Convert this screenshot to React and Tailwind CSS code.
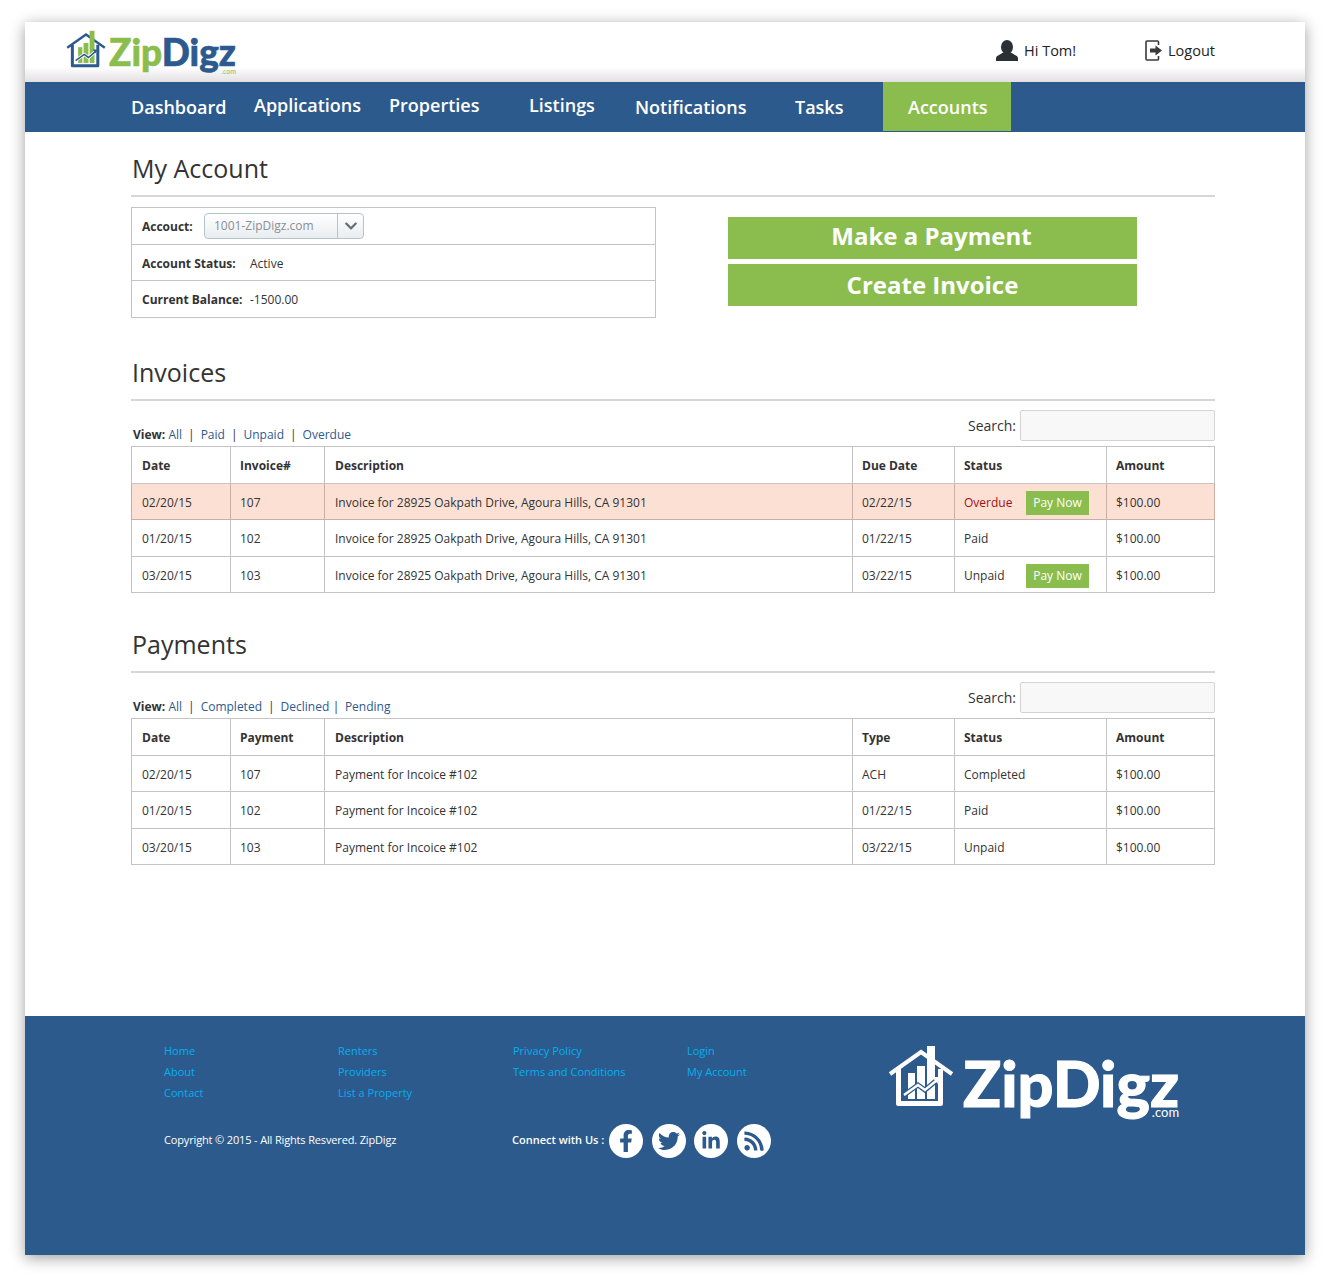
import { FaFacebookF, FaTwitter, FaLinkedinIn, FaRss, FaChevronDown } from "react-icons/fa";

const navItems = [
    { label: "Dashboard", width: "w-[123px]" },
    { label: "Applications", width: "w-[135px]", raised: true },
    { label: "Properties", width: "w-[140px]", raised: true },
    { label: "Listings", width: "w-[106px]", raised: true },
    { label: "Notifications", width: "w-[160px]" },
    { label: "Tasks", width: "w-[88px]" },
];

const invoices = [
    { date: "02/20/15", id: "107", due: "02/22/15", status: "Overdue", pay: true, overdue: true, height: "h-[36px]" },
    { date: "01/20/15", id: "102", due: "01/22/15", status: "Paid", height: "h-[37px]" },
    { date: "03/20/15", id: "103", due: "03/22/15", status: "Unpaid", pay: true, height: "h-[36px]" },
];

const payments = [
    { date: "02/20/15", id: "107", type: "ACH", status: "Completed", height: "h-[36px]" },
    { date: "01/20/15", id: "102", type: "01/22/15", status: "Paid", height: "h-[37px]" },
    { date: "03/20/15", id: "103", type: "03/22/15", status: "Unpaid", height: "h-[36px]" },
];

const footerLinks = [
    { width: "w-[174px]", links: ["Home", "About", "Contact"] },
    { width: "w-[175px]", links: ["Renters", "Providers", "List a Property"] },
    { width: "w-[174px]", links: ["Privacy Policy", "Terms and Conditions"] },
    { width: "w-[120px]", links: ["Login", "My Account"] },
];

const socials = [
    { Icon: FaFacebookF, size: "h-[22px] w-[22px]" },
    { Icon: FaTwitter, size: "h-[22px] w-[22px]" },
    { Icon: FaLinkedinIn, size: "h-[20px] w-[20px]" },
    { Icon: FaRss, size: "h-[22px] w-[22px]" },
];

// left padding per column, the text does not sit evenly in the reference
const pads = ["pl-[10px]", "pl-[9px]", "pl-[10px]", "pl-[9px]", "pl-[9px]", "pl-[9px]"];

function House({ wall, bar, bg, className }) {
    return (
        <svg viewBox="0 0 66 60" className={className} fill="none">
            <path d="M2 28 L33 6 L64 28" stroke={wall} strokeWidth="4" strokeLinejoin="miter" />
            <path d="M10.5 23 V57.5 H52.5 V23" stroke={wall} strokeWidth="5" strokeLinejoin="round" />
            <rect x="20" y="27" width="7" height="26" fill={bar} />
            <rect x="29" y="20" width="8" height="33" fill={bar} />
            <rect x="39" y="0" width="8" height="53" fill={bar} />
            <path d="M16 49 L30 39 L37 44 L49 34" stroke={bg} strokeWidth="5" />
            <path d="M16 49 L30 39 L37 44 L49 34" stroke={wall} strokeWidth="2.5" />
            <path d="M44 31 L51 31 L50 38 Z" fill={wall} />
        </svg>
    );
}

function ViewLinks({ links, separators }) {
    return (
        <p className="text-[12px] leading-[16px] text-[#333]">
            <b className="font-bold">View:</b>{" "}
            {links.map((link, i) => (
                <span key={link}>
                    <a className="text-[#2d5a8e]">{link}</a>
                    {i < links.length - 1 && <span className={separators[i]}>|</span>}
                </span>
            ))}
        </p>
    );
}

function Section({ title, children }) {
    return (
        <section>
            <h2 className="h-[46px] border-b-2 border-[#d6d6d6] pt-px pl-px text-[25px] leading-[33px] text-[#333]">{title}</h2>
            {children}
        </section>
    );
}

function Toolbar({ links, separators }) {
    return (
        <div className="flex h-[45px] items-end justify-between pb-[3px]">
            <div className="pl-[2px]">
                <ViewLinks links={links} separators={separators} />
            </div>
            <div className="flex items-center gap-[4px] self-start pt-[9px]">
                <span className="text-[14px] text-[#333]">Search:</span>
                <input className="h-[31px] w-[195px] rounded-[2px] border border-[#d4d4d4] bg-[#f8f8f8]" />
            </div>
        </div>
    );
}

function DataTable({ headers, children }) {
    return (
        <table className="w-[1083px] table-fixed border-collapse text-[12px] text-[#333]">
            <colgroup>
                <col className="w-[99px]" />
                <col className="w-[94px]" />
                <col className="w-[528px]" />
                <col className="w-[102px]" />
                <col className="w-[152px]" />
                <col className="w-[108px]" />
            </colgroup>
            <thead>
                <tr className="h-[37px]">
                    {headers.map((h, i) => (
                        <th key={h} className={`border border-[#c4c4c4] pt-[2px] text-left font-bold ${pads[i]}`}>{h}</th>
                    ))}
                </tr>
            </thead>
            <tbody>{children}</tbody>
        </table>
    );
}

const cell = "border border-[#c4c4c4] pt-[2px]";
const overdueCell = "border border-[#c9aea5] pt-[2px]";

export default function App() {
    return (
        <div className="h-[1277px] w-[1330px] bg-white px-[25px] pt-[22px] font-['Open_Sans',sans-serif]">
            <div className="h-[1233px] w-[1280px] bg-white shadow-[0_3px_14px_rgba(0,0,0,0.38)]">
                {/* top bar */}
                <header className="flex h-[60px] items-start bg-linear-to-b from-white from-[75%] to-[#e2e0e2] pl-[41px]">
                    <div className="flex items-start pt-[8px]">
                        <House wall="#2d5a8e" bar="#8bbd4e" bg="#ffffff" className="h-[38px] w-[40px]" />
                        <div className="relative mt-px ml-[3px] font-['Lato',sans-serif] text-[37px] leading-[42px] font-black">
                            <span className="text-[#8bbd4e] [-webkit-text-stroke:0.6px_#8bbd4e]">Zip</span>
                            <span className="text-[#2d5a8e] [-webkit-text-stroke:0.6px_#2d5a8e]">Digz</span>
                            <span className="absolute right-0 bottom-[-2px] text-[7px] leading-[8px] font-normal text-[#8bbd4e]">.com</span>
                        </div>
                    </div>
                    <div className="ml-auto flex items-center pt-[18px] pr-[90px] text-[14.5px] text-[#222]">
                        <svg viewBox="0 0 22 21" className="h-[21px] w-[22px] text-[#2b3034]" fill="currentColor">
                            <ellipse cx="11" cy="7" rx="6" ry="7" />
                            <path d="M0 21 V18 Q0 16 3 15 L8 12 H14 L19 15 Q22 16 22 18 V21 Z" />
                        </svg>
                        <span className="ml-[6px] w-[121px]">Hi Tom!</span>
                        <svg viewBox="0 0 18 21" className="h-[21px] w-[18px] text-[#3a3a3a]" fill="none">
                            <path d="M13.5 5 V2 Q13.5 1 12.5 1 H2 Q1 1 1 2 V19 Q1 20 2 20 H12.5 Q13.5 20 13.5 19 V16" stroke="currentColor" strokeWidth="1.6" />
                            <path d="M5 8.5 H10.5 V5.5 L17 10.5 L10.5 15.5 V12.5 H5 Z" fill="currentColor" />
                        </svg>
                        <span className="ml-[5px]">Logout</span>
                    </div>
                </header>

                {/* main nav */}
                <nav className="flex h-[50px] items-start bg-[#2d5a8c] pl-[106px] text-[18px] font-semibold text-white">
                    {navItems.map((item) => (
                        <a key={item.label} className={`flex h-[50px] items-center ${item.width} ${item.raised ? "pb-[4px]" : ""}`}>
                            {item.label}
                        </a>
                    ))}
                    <a className="flex h-[49px] w-[128px] items-center bg-[#8bbd4e] pt-[2px] pl-[25px]">Accounts</a>
                </nav>

                <main className="h-[884px] pl-[106px]">
                    <div className="w-[1084px]">
                        <div className="pt-[19px]">
                            <Section title="My Account" />
                        </div>

                        <div className="mt-[10px] flex items-start">
                            <div className="h-[111px] w-[525px] border border-[#c4c4c4] text-[12px] text-[#333]">
                                <div className="flex h-[37px] items-center border-b border-[#c4c4c4] pl-[10px]">
                                    <b className="w-[62px] pt-[2px] font-bold">Accouct:</b>
                                    <div className="flex h-[26px] w-[160px] items-center rounded-[4px] border border-[#b5c4cc] bg-linear-to-b from-white to-[#e9edf0] text-[#8a8f93]">
                                        <span className="w-[132px] pl-[9px]">1001-ZipDigz.com</span>
                                        <span className="flex h-full flex-1 items-center justify-center border-l border-[#b5c4cc]">
                                            <FaChevronDown className="h-[14px] w-[14px] text-[#666c70]" />
                                        </span>
                                    </div>
                                </div>
                                <div className="flex h-[36px] items-center border-b border-[#c4c4c4] pt-[2px] pl-[10px]">
                                    <b className="w-[108px] font-bold">Account Status:</b>
                                    <span>Active</span>
                                </div>
                                <div className="flex h-[36px] items-center pt-[2px] pl-[10px]">
                                    <b className="w-[108px] font-bold">Current Balance:</b>
                                    <span>-1500.00</span>
                                </div>
                            </div>
                            <div className="ml-[72px] flex flex-col gap-[5px] pt-[10px]">
                                <a className="flex h-[42px] w-[409px] items-center justify-center bg-[#8bbd4e] pr-[2px] pb-[5px] text-[24px] font-bold text-white">Make a Payment</a>
                                <a className="flex h-[42px] w-[409px] items-center justify-center bg-[#8bbd4e] text-[24px] font-bold text-white">Create Invoice</a>
                            </div>
                        </div>

                        <div className="mt-[37px]">
                            <Section title="Invoices">
                                <Toolbar
                                    links={["All", "Paid", "Unpaid", "Overdue"]}
                                    separators={["mx-[6px]", "mx-[6px]", "mx-[6px]"]}
                                />
                                <DataTable headers={["Date", "Invoice#", "Description", "Due Date", "Status", "Amount"]}>
                                    {invoices.map((row) => {
                                        const c = row.overdue ? overdueCell : cell;
                                        return (
                                            <tr key={row.id} className={`${row.height} ${row.overdue ? "bg-[#fde0d4]" : ""}`}>
                                                <td className={`${c} ${pads[0]}`}>{row.date}</td>
                                                <td className={`${c} ${pads[1]}`}>{row.id}</td>
                                                <td className={`${c} ${pads[2]}`}>Invoice for 28925 Oakpath Drive, Agoura Hills, CA 91301</td>
                                                <td className={`${c} ${pads[3]}`}>{row.due}</td>
                                                <td className={`${c} ${pads[4]}`}>
                                                    <div className="flex items-center">
                                                        <span className={`w-[62px] ${row.overdue ? "text-[#a30f16]" : ""}`}>{row.status}</span>
                                                        {row.pay && (
                                                            <a className="flex h-[24px] w-[63px] items-center justify-center bg-[#8bbd4e] text-white">Pay Now</a>
                                                        )}
                                                    </div>
                                                </td>
                                                <td className={`${c} ${pads[5]}`}>$100.00</td>
                                            </tr>
                                        );
                                    })}
                                </DataTable>
                            </Section>
                        </div>

                        <div className="mt-[34px]">
                            <Section title="Payments">
                                <Toolbar
                                    links={["All", "Completed", "Declined", "Pending"]}
                                    separators={["mx-[6px]", "mx-[6px]", "ml-[3.5px] mr-[5.5px]"]}
                                />
                                <DataTable headers={["Date", "Payment", "Description", "Type", "Status", "Amount"]}>
                                    {payments.map((row) => (
                                        <tr key={row.id} className={row.height}>
                                            <td className={`${cell} ${pads[0]}`}>{row.date}</td>
                                            <td className={`${cell} ${pads[1]}`}>{row.id}</td>
                                            <td className={`${cell} ${pads[2]}`}>Payment for Incoice #102</td>
                                            <td className={`${cell} ${pads[3]}`}>{row.type}</td>
                                            <td className={`${cell} ${pads[4]}`}>{row.status}</td>
                                            <td className={`${cell} ${pads[5]}`}>$100.00</td>
                                        </tr>
                                    ))}
                                </DataTable>
                            </Section>
                        </div>
                    </div>
                </main>

                {/* footer */}
                <footer className="flex h-[239px] bg-[#2d5a8c] pt-[24px] pl-[139px]">
                    <div className="w-[724px]">
                        <div className="flex h-[63px]">
                            {footerLinks.map((col) => (
                                <ul key={col.links[0]} className={`${col.width} text-[11px] leading-[21px] text-[#00b0f0]`}>
                                    {col.links.map((link) => (
                                        <li key={link}>{link}</li>
                                    ))}
                                </ul>
                            ))}
                        </div>
                        <div className="mt-[21px] flex items-center text-white">
                            <p className="w-[348px] pb-[2px] text-[11px] tracking-[-0.15px]">Copyright © 2015 - All Rights Resvered. ZipDigz</p>
                            <p className="w-[97px] pb-[2px] text-[11px] font-semibold whitespace-nowrap">Connect with Us :</p>
                            <div className="flex gap-[8.6px]">
                                {socials.map(({ Icon, size }, i) => (
                                    <span key={i} className="flex h-[34px] w-[34px] items-center justify-center rounded-full bg-white text-[#2d5a8c]">
                                        <Icon className={size} />
                                    </span>
                                ))}
                            </div>
                        </div>
                    </div>
                    <div className="flex items-start pt-[6px]">
                        <House wall="#ffffff" bar="#ffffff" bg="#2d5a8c" className="h-[60px] w-[66px]" />
                        <div className="relative ml-[9px] font-['Lato',sans-serif] text-[63px] leading-[74px] font-black text-white [-webkit-text-stroke:1px_#ffffff]">
                            ZipDigz
                            <span className="absolute right-0 bottom-[1px] text-[13px] leading-[14px] font-normal [-webkit-text-stroke:0]">.com</span>
                        </div>
                    </div>
                </footer>
            </div>
        </div>
    );
}
